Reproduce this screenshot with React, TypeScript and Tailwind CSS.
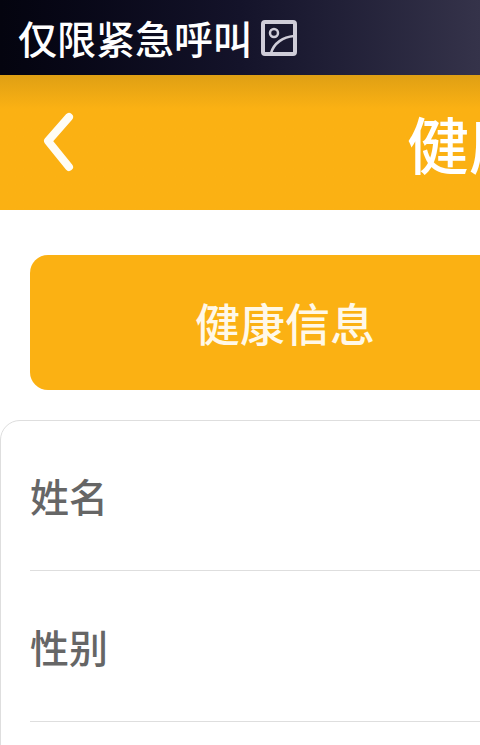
export default function App() {
  const font = { fontFamily: '"Noto Sans CJK SC", "Noto Sans", sans-serif' };
  return (
    <div style={font} className="w-[480px] h-[745px] overflow-hidden bg-white flex flex-col">
      <div className="h-[75px] shrink-0 flex items-center pl-[18px] gap-[9px] bg-gradient-to-r from-[#04040f] via-[#14132a] to-[#35334a]">
        <span className="text-[39px] leading-none font-medium text-white whitespace-nowrap">仅限紧急呼叫</span>
        <svg width="36" height="36" viewBox="0 0 36 36" fill="none" className="shrink-0">
          <rect x="2" y="2" width="32" height="32" rx="2" stroke="#cfcdd8" strokeWidth="4" />
          <circle cx="13" cy="13" r="4" stroke="#cfcdd8" strokeWidth="2.5" />
          <path d="M10 33 C13 23 22 17 33 16" stroke="#cfcdd8" strokeWidth="2.5" />
        </svg>
      </div>
      <div className="h-[135px] shrink-0 relative flex items-center bg-[#fbb113] bg-gradient-to-b from-[#dfa014] via-[#fbb113] via-[25%] to-[#fbb113]">
        <svg width="40" height="64" viewBox="0 0 40 64" fill="none" className="ml-[39px] shrink-0">
          <path d="M30 6 L9 30 L30 56" stroke="#fffdf5" strokeWidth="8" strokeLinecap="round" strokeLinejoin="round" />
        </svg>
        <span className="ml-[328px] text-[62px] leading-none font-medium text-white whitespace-nowrap">健康信息</span>
      </div>
      <div className="pt-[45px] px-[30px] shrink-0">
        <div className="w-[1020px] h-[135px] rounded-[18px] bg-[#fbb113] flex items-center pl-[165px] text-[45px] leading-none font-medium text-[#fff8e8] whitespace-nowrap">
          健康信息
        </div>
      </div>
      <div className="mt-[30px] w-[1080px] border border-[#dedede] rounded-[20px] bg-white px-[29px] shrink-0">
        <div className="h-[150px] border-b border-[#dedede] flex items-center text-[39px] leading-none font-medium text-[#666666]">姓名</div>
        <div className="h-[151px] border-b border-[#dedede] flex items-center text-[39px] leading-none font-medium text-[#666666]">性别</div>
        <div className="h-[151px]" />
      </div>
    </div>
  );
}
